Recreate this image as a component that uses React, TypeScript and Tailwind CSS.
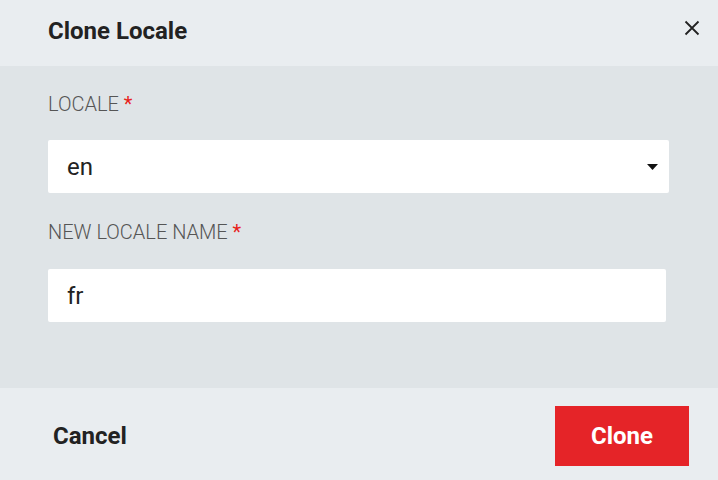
const font = { fontFamily: "Roboto, 'Liberation Sans', sans-serif" };

function Label({ text }: { text: string }) {
  return (
    <div className="text-[20px] leading-[24px] text-[#555] font-light">
      {text} <span className="text-[#e8221b] font-normal">*</span>
    </div>
  );
}

export default function App() {
  return (
    <div className="w-[718px] h-[480px] flex flex-col bg-[#e9edf0]" style={font}>
      <div className="h-[66px] flex items-center justify-between pl-[48px] pr-[18px] shrink-0">
        <h2 className="text-[24px] leading-[28px] font-bold text-[#222] pb-[4px]">Clone Locale</h2>
        <button className="w-[16px] h-[16px] mb-[10px] text-[#222]">
          <svg viewBox="0 0 16 16" width="16" height="16">
            <path d="M1.5 1.5 L14.5 14.5 M14.5 1.5 L1.5 14.5" stroke="currentColor" strokeWidth="1.8" />
          </svg>
        </button>
      </div>
      <div className="h-[322px] bg-[#dfe4e7] pl-[48px] pt-[26px] shrink-0">
        <Label text="LOCALE" />
        <div className="mt-[24px] w-[621px] h-[53px] bg-white rounded-[2px] flex items-center justify-between pl-[19px] pr-[11px]">
          <span className="text-[24px] text-[#222]">en</span>
          <svg width="11" height="6" viewBox="0 0 11 6">
            <path d="M0 0 H11 L5.5 6 Z" fill="#111" />
          </svg>
        </div>
        <div className="mt-[27px]">
          <Label text="NEW LOCALE NAME" />
        </div>
        <div className="mt-[25px] w-[618px] h-[53px] bg-white rounded-[2px] flex items-center pl-[19px]">
          <span className="text-[24px] text-[#222]">fr</span>
        </div>
      </div>
      <div className="flex-1 flex items-center justify-between pl-[53px] pr-[29px] pt-[4px]">
        <button className="text-[24px] font-bold text-[#222]">Cancel</button>
        <button className="w-[134px] h-[60px] bg-[#e52428] text-white text-[24px] font-bold">Clone</button>
      </div>
    </div>
  );
}
